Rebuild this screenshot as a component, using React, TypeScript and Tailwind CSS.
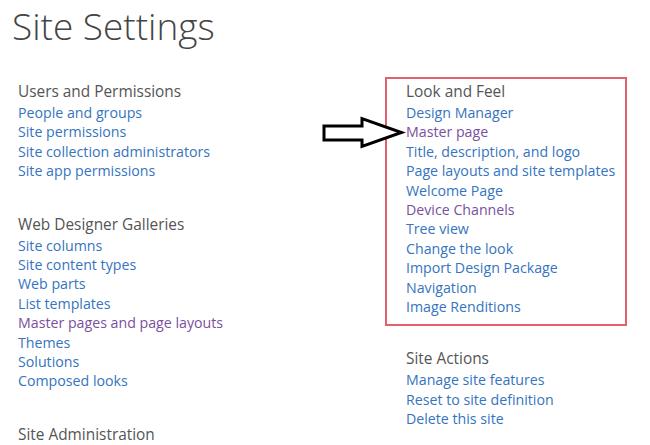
import React from "react";

type Item = { label: string; visited?: boolean };

const Section = ({ title, items }: { title: string; items: Item[] }) => (
  <div className="flex flex-col">
    <div className="text-[15.4px] leading-[22px] text-[#555555]">{title}</div>
    {items.map((it) => (
      <a
        key={it.label}
        href="#"
        className={
          "text-[14.2px] leading-[19.4px] whitespace-nowrap " +
          (it.visited ? "text-[#7a4f9e]" : "text-[#3574c0]")
        }
      >
        {it.label}
      </a>
    ))}
  </div>
);

export default function App() {
  return (
    <div
      className="relative w-[650px] h-[445px] overflow-hidden bg-white"
      style={{ fontFamily: '"Open Sans", "Noto Sans", sans-serif' }}
    >
      <h1 className="pl-[12px] text-[37px] leading-[51px] font-light text-[#444444]">
        Site Settings
      </h1>
      <div className="flex pl-[18px] pt-[30px]">
        <div className="w-[367px] flex flex-col gap-[33px]">
          <Section
            title="Users and Permissions"
            items={[
              { label: "People and groups" },
              { label: "Site permissions" },
              { label: "Site collection administrators" },
              { label: "Site app permissions" },
            ]}
          />
          <Section
            title="Web Designer Galleries"
            items={[
              { label: "Site columns" },
              { label: "Site content types" },
              { label: "Web parts" },
              { label: "List templates" },
              { label: "Master pages and page layouts", visited: true },
              { label: "Themes" },
              { label: "Solutions" },
              { label: "Composed looks" },
            ]}
          />
          <Section title="Site Administration" items={[]} />
        </div>
        <div className="flex flex-col -mt-[4px]">
          <div className="w-[242px] border-2 border-[#e4606c] pl-[19px] pt-[2px] pb-[8px]">
            <Section
              title="Look and Feel"
              items={[
                { label: "Design Manager" },
                { label: "Master page", visited: true },
                { label: "Title, description, and logo" },
                { label: "Page layouts and site templates" },
                { label: "Welcome Page" },
                { label: "Device Channels", visited: true },
                { label: "Tree view" },
                { label: "Change the look" },
                { label: "Import Design Package" },
                { label: "Navigation" },
                { label: "Image Renditions" },
              ]}
            />
          </div>
          <div className="pl-[21px] pt-[22px]">
            <Section
              title="Site Actions"
              items={[
                { label: "Manage site features" },
                { label: "Reset to site definition" },
                { label: "Delete this site" },
              ]}
            />
          </div>
        </div>
      </div>
      <svg
        className="absolute left-0 top-0 pointer-events-none"
        width="650"
        height="445"
        viewBox="0 0 650 445"
      >
        <path
          d="M324 126 L362 126 L362 118.5 L401.5 132.5 L362 146.5 L362 140 L324 140 Z"
          fill="white"
          stroke="black"
          strokeWidth="3"
          strokeLinejoin="miter"
        />
      </svg>
    </div>
  );
}
